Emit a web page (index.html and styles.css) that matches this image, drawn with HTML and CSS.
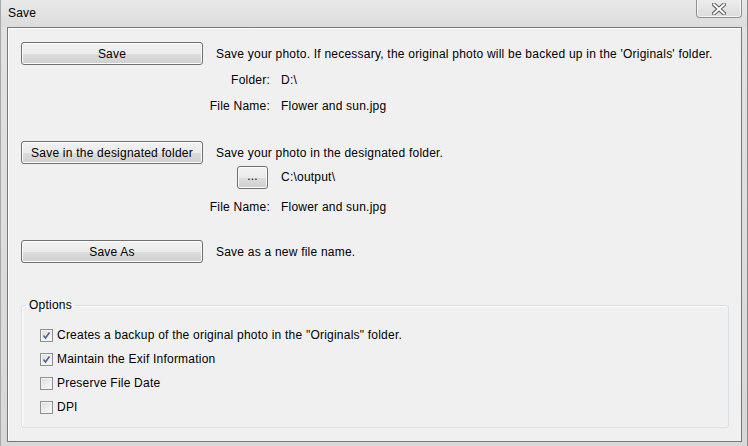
FILE: index.html
```html
<!DOCTYPE html>
<html>
<head>
<meta charset="utf-8">
<link rel="stylesheet" href="styles.css">
</head>
<body>
<div class="window">
  <div class="titlebar">
    <span class="title">Save</span>
    <div class="close">
      <svg width="14" height="12" viewBox="0 0 14 12">
        <path d="M2 1.5 L12 10.5 M12 1.5 L2 10.5" stroke="#5a5a5a" stroke-width="4" stroke-linecap="square"/>
        <path d="M2 1.5 L12 10.5 M12 1.5 L2 10.5" stroke="#ffffff" stroke-width="2" stroke-linecap="square"/>
      </svg>
    </div>
  </div>
  <div class="panel">
    <div class="section s1">
      <div class="row head">
        <div class="btn big">Save</div>
        <span class="desc">Save your photo. If necessary, the original photo will be backed up in the 'Originals' folder.</span>
      </div>
      <div class="row sub first">
        <span class="label">Folder:</span>
        <span class="value">D:\</span>
      </div>
      <div class="row sub">
        <span class="label">File Name:</span>
        <span class="value">Flower and sun.jpg</span>
      </div>
    </div>

    <div class="section s2">
      <div class="row head">
        <div class="btn big">Save in the designated folder</div>
        <span class="desc">Save your photo in the designated folder.</span>
      </div>
      <div class="row sub browse">
        <span class="label"><span class="btn small">...</span></span>
        <span class="value">C:\output\</span>
      </div>
      <div class="row sub fn2">
        <span class="label">File Name:</span>
        <span class="value">Flower and sun.jpg</span>
      </div>
    </div>

    <div class="section s3">
      <div class="row head">
        <div class="btn big">Save As</div>
        <span class="desc">Save as a new file name.</span>
      </div>
    </div>

    <fieldset class="options">
      <legend>Options</legend>
      <div class="opt"><span class="cb checked"><svg width="9" height="9" viewBox="0 0 9 9"><path d="M1.5 4.5 L3.5 7 L7.5 1.5" fill="none" stroke="#4a5d8a" stroke-width="1.5"/></svg></span>Creates a backup of the original photo in the "Originals" folder.</div>
      <div class="opt"><span class="cb checked"><svg width="9" height="9" viewBox="0 0 9 9"><path d="M1.5 4.5 L3.5 7 L7.5 1.5" fill="none" stroke="#4a5d8a" stroke-width="1.5"/></svg></span>Maintain the Exif Information</div>
      <div class="opt"><span class="cb"></span>Preserve File Date</div>
      <div class="opt"><span class="cb"></span>DPI</div>
    </fieldset>
  </div>
</div>
</body>
</html>
```

FILE: styles.css
```css
* { box-sizing: border-box; }
html, body {
  margin: 0;
  padding: 0;
  width: 748px;
  height: 446px;
  overflow: hidden;
  font-family: "Liberation Sans", Arial, sans-serif;
  font-size: 12px;
  letter-spacing: 0.22px;
  color: #000;
}
.window {
  width: 748px;
  height: 446px;
  background: linear-gradient(to bottom, #e2e2e2 0%, #dedede 40%, #d8d8d8 100%);
  border-left: 1px solid #a8a8a8;
  border-right: 1px solid #8a8a8a;
  display: flex;
  flex-direction: column;
}
.titlebar {
  height: 27px;
  display: flex;
  align-items: flex-start;
  padding-left: 7px;
  padding-right: 5px;
  background: linear-gradient(to bottom, #e8e8e8, #dcdcdc);
}
.title {
  margin-top: 6px;
  line-height: 15px;
}
.close {
  margin-left: auto;
  width: 46px;
  height: 18px;
  border: 1px solid #8f8f8f;
  border-top: none;
  border-radius: 0 0 4px 4px;
  background: linear-gradient(to bottom, #ececec, #dcdcdc);
  display: flex;
  align-items: center;
  justify-content: center;
  box-shadow: inset 0 -1px 0 #f6f6f6, inset 1px 0 0 #f6f6f6, inset -1px 0 0 #f6f6f6;
}
.panel {
  margin-left: 6px;
  width: 735px;
  height: 415px;
  border: 1px solid #777;
  background: #f0f0f0;
  padding: 14px 0 0 13px;
  box-shadow: inset 1px 1px 0 #fff;
}
.row {
  display: flex;
  align-items: center;
}
.head { height: 23px; }
.sub { height: 26px; }
.sub.first { margin-top: 2px; }
.browse { height: 24px; margin-top: 1px; }
.fn2 { margin-top: 5px; }
.s2 { margin-top: 22px; }
.s3 { margin-top: 20px; }
.btn {
  border: 1px solid #707070;
  border-radius: 3px;
  background: linear-gradient(to bottom, #f2f2f2 0%, #ebebeb 50%, #dddddd 51%, #cfcfcf 100%);
  display: flex;
  align-items: center;
  justify-content: center;
  box-shadow: inset 0 0 0 1px #fcfcfc;
}
.big {
  width: 182px;
  height: 23px;
  margin-right: 13px;
}
.small {
  width: 31px;
  height: 23px;
  padding-bottom: 3px;
}
.label {
  width: 65px;
  margin-left: 184px;
  display: flex;
  justify-content: flex-end;
}
.browse .label { width: 63px; }
.browse .value { margin-left: 13px; }
.value { margin-left: 11px; }
.options {
  margin: 35px 0 0 0;
  width: 708px;
  border: 1px solid #d5dfe5;
  border-radius: 3px;
  padding: 11px 0 8px 4px;
  box-shadow: inset 1px 1px 0 #fff;
}
.options legend {
  padding: 0 3px;
  line-height: 14px;
}
.opt {
  height: 24px;
  display: flex;
  align-items: center;
  padding-left: 14px;
}
.cb {
  width: 13px;
  height: 13px;
  border: 1px solid #8e8f8f;
  background: linear-gradient(135deg, #dcdcdc, #fbfbfb);
  box-shadow: inset 0 0 0 1px #f4f4f4;
  margin-right: 4px;
  display: flex;
  align-items: center;
  justify-content: center;
}
```
